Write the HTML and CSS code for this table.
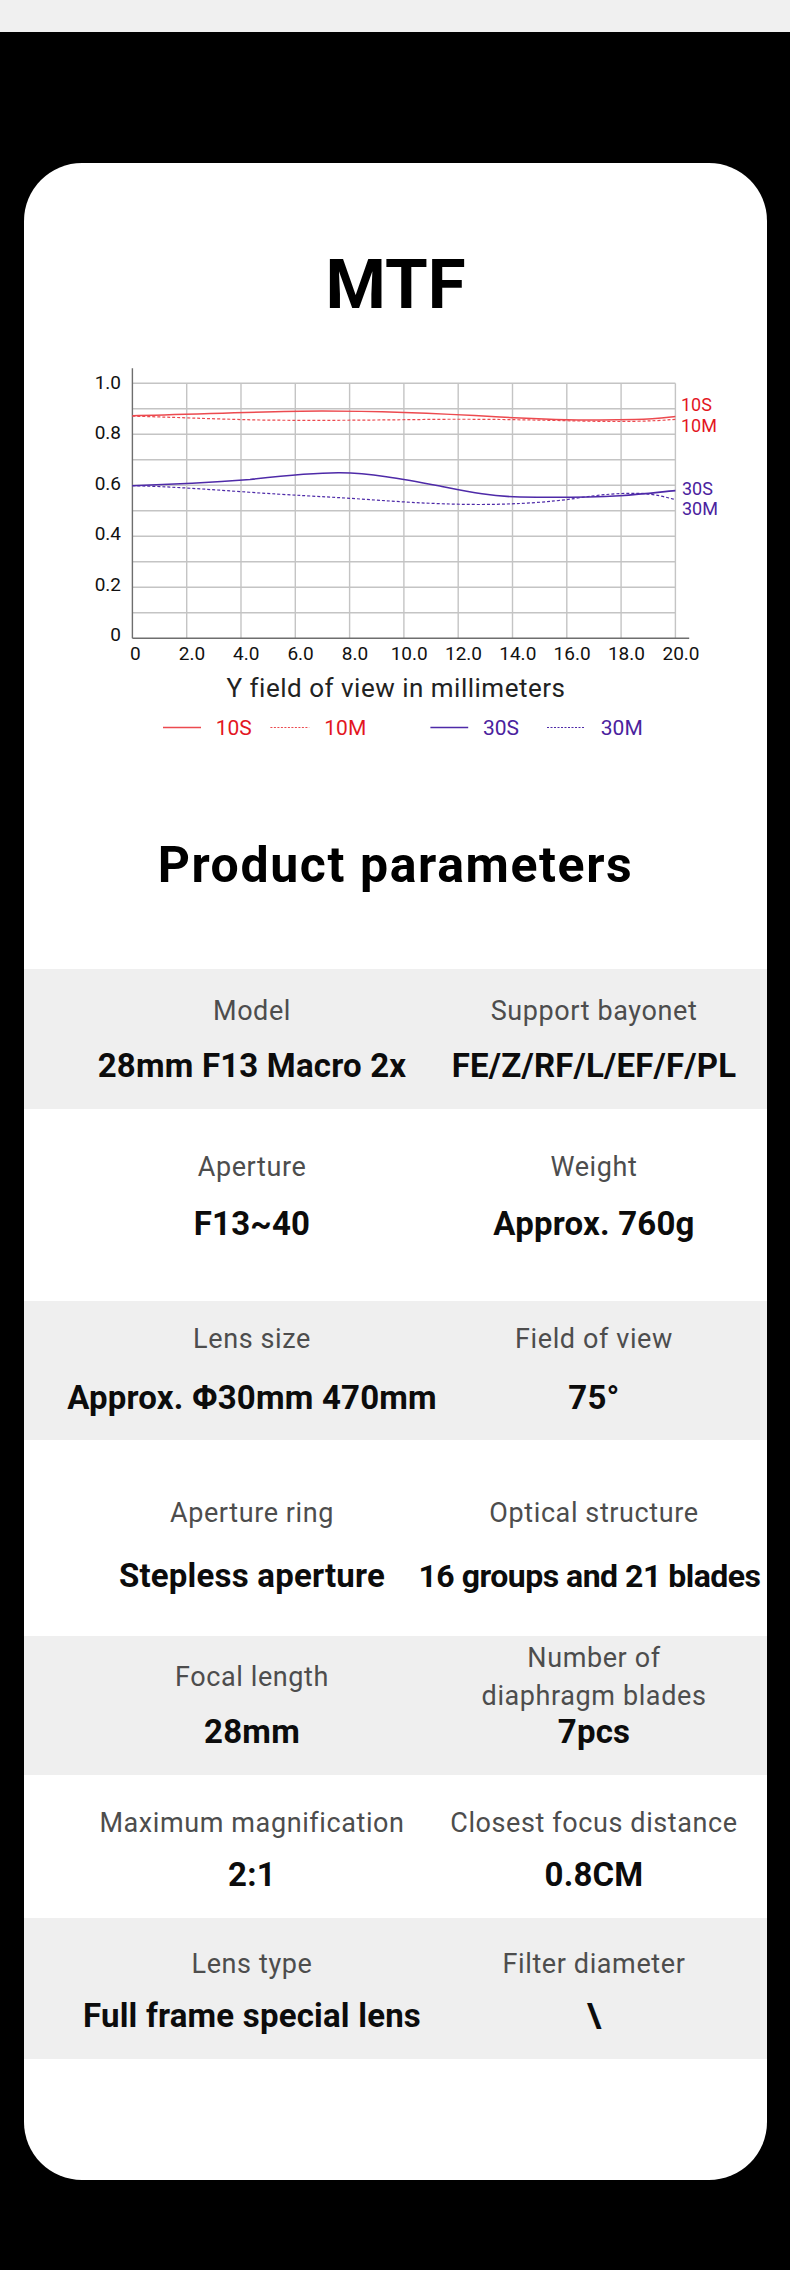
FILE: index.html
```html
<!DOCTYPE html>
<html lang="en">
<head>
<meta charset="utf-8">
<title>MTF and Product parameters</title>
<link rel="stylesheet" href="styles.css">
</head>
<body>
<div class="topbar"></div>
<main class="page">
  <section class="card">
    <h1 class="title">MTF</h1>
    <svg class="chart" viewBox="0 0 660 420" width="660" height="420" xmlns="http://www.w3.org/2000/svg">
      <g class="grid">
        <line x1="72.4" y1="43.3" x2="615.4" y2="43.3"/>
        <line x1="72.4" y1="68.8" x2="615.4" y2="68.8"/>
        <line x1="72.4" y1="94.3" x2="615.4" y2="94.3"/>
        <line x1="72.4" y1="119.8" x2="615.4" y2="119.8"/>
        <line x1="72.4" y1="145.3" x2="615.4" y2="145.3"/>
        <line x1="72.4" y1="170.8" x2="615.4" y2="170.8"/>
        <line x1="72.4" y1="196.3" x2="615.4" y2="196.3"/>
        <line x1="72.4" y1="221.8" x2="615.4" y2="221.8"/>
        <line x1="72.4" y1="247.3" x2="615.4" y2="247.3"/>
        <line x1="72.4" y1="272.8" x2="615.4" y2="272.8"/>
        <line x1="126.7" y1="43.3" x2="126.7" y2="298.3"/>
        <line x1="181" y1="43.3" x2="181" y2="298.3"/>
        <line x1="235.3" y1="43.3" x2="235.3" y2="298.3"/>
        <line x1="289.6" y1="43.3" x2="289.6" y2="298.3"/>
        <line x1="343.9" y1="43.3" x2="343.9" y2="298.3"/>
        <line x1="398.2" y1="43.3" x2="398.2" y2="298.3"/>
        <line x1="452.5" y1="43.3" x2="452.5" y2="298.3"/>
        <line x1="506.8" y1="43.3" x2="506.8" y2="298.3"/>
        <line x1="561.1" y1="43.3" x2="561.1" y2="298.3"/>
        <line x1="615.4" y1="43.3" x2="615.4" y2="298.3"/>
      </g>
      <g class="axis">
        <line x1="72.4" y1="28.3" x2="72.4" y2="298.3"/>
        <line x1="72.4" y1="298.3" x2="629.2" y2="298.3"/>
      </g>
      <g class="ylabels">
        <text x="61" y="49.3">1.0</text>
        <text x="61" y="98.7">0.8</text>
        <text x="61" y="149.7">0.6</text>
        <text x="61" y="200.3">0.4</text>
        <text x="61" y="251.3">0.2</text>
        <text x="61" y="301">0</text>
      </g>
      <g class="xlabels">
        <text x="75.4" y="320">0</text>
        <text x="132" y="320">2.0</text>
        <text x="186.3" y="320">4.0</text>
        <text x="240.6" y="320">6.0</text>
        <text x="294.9" y="320">8.0</text>
        <text x="349.2" y="320">10.0</text>
        <text x="403.5" y="320">12.0</text>
        <text x="457.8" y="320">14.0</text>
        <text x="512.1" y="320">16.0</text>
        <text x="566.4" y="320">18.0</text>
        <text x="621" y="320">20.0</text>
      </g>
      <path class="c-red" d="M72.4,75.7 C130,74.8 200,71.2 262,71 C320,71 380,73.5 440,77 C500,80.3 540,80.5 575,79.5 C595,79 608,77.3 615.4,76.6"/>
      <path class="c-red dash" d="M72.4,76.2 C110,77 150,79 200,80 C260,80.8 320,80 380,79.3 C440,79 480,80.2 520,81 C560,82 590,81.5 615.4,79.3"/>
      <path class="c-purple" d="M72.4,145.7 C110,144.5 150,142.5 190,139.5 C230,135 255,132.6 280,132.8 C310,133.2 340,138.5 380,146 C410,152 430,156.3 460,157 C500,157.6 530,157.3 560,155.7 C585,154 600,152 615.4,150.6"/>
      <path class="c-purple dash" d="M72.4,145.7 C110,146.5 150,149.5 190,152.3 C230,155 260,156.5 290,158.3 C330,161 370,164.3 420,164.5 C460,164.3 490,162 515,158.5 C540,154.5 560,152.8 580,153.4 C595,154 605,157 615.4,159.6"/>
      <g class="rlabels">
        <text class="t-red" x="621" y="70.5">10S</text>
        <text class="t-red" x="621" y="91.5">10M</text>
        <text class="t-purple" x="622" y="154.5">30S</text>
        <text class="t-purple" x="622" y="175">30M</text>
      </g>
      <text class="xtitle" x="336" y="357.3">Y field of view in millimeters</text>
      <g class="legend">
        <line class="c-red" x1="103" y1="387.5" x2="141" y2="387.5"/>
        <text class="t-red" x="155.7" y="395">10S</text>
        <line class="c-red dot" x1="210.4" y1="387.5" x2="249.2" y2="387.5"/>
        <text class="t-red" x="264.3" y="395">10M</text>
        <line class="c-purple" x1="370.4" y1="387.5" x2="408.2" y2="387.5"/>
        <text class="t-purple" x="423" y="395">30S</text>
        <line class="c-purple dot" x1="487" y1="387.5" x2="525.3" y2="387.5"/>
        <text class="t-purple" x="540.8" y="395">30M</text>
      </g>
    </svg>

    <h2 class="subtitle">Product parameters</h2>

    <div class="specs">
      <div class="row row--gray row--1">
        <div class="cell"><span class="label">Model</span><span class="value">28mm F13 Macro 2x</span></div>
        <div class="cell"><span class="label">Support bayonet</span><span class="value">FE/Z/RF/L/EF/F/PL</span></div>
      </div>
      <div class="row row--2">
        <div class="cell"><span class="label">Aperture</span><span class="value">F13~40</span></div>
        <div class="cell"><span class="label">Weight</span><span class="value">Approx. 760g</span></div>
      </div>
      <div class="row row--gray row--3">
        <div class="cell"><span class="label">Lens size</span><span class="value">Approx. Φ30mm 470mm</span></div>
        <div class="cell"><span class="label">Field of view</span><span class="value">75°</span></div>
      </div>
      <div class="row row--4">
        <div class="cell"><span class="label">Aperture ring</span><span class="value">Stepless aperture</span></div>
        <div class="cell"><span class="label">Optical structure</span><span class="value value--tight">16 groups and 21 blades</span></div>
      </div>
      <div class="row row--gray row--5">
        <div class="cell"><span class="label">Focal length</span><span class="value">28mm</span></div>
        <div class="cell"><span class="label">Number of<br>diaphragm blades</span><span class="value">7pcs</span></div>
      </div>
      <div class="row row--6">
        <div class="cell"><span class="label">Maximum magnification</span><span class="value">2:1</span></div>
        <div class="cell"><span class="label">Closest focus distance</span><span class="value">0.8CM</span></div>
      </div>
      <div class="row row--gray row--7">
        <div class="cell"><span class="label">Lens type</span><span class="value">Full frame special lens</span></div>
        <div class="cell"><span class="label">Filter diameter</span><span class="value">\</span></div>
      </div>
    </div>
  </section>
</main>
</body>
</html>
```

FILE: styles.css
```css
* { box-sizing: border-box; }

html, body {
  margin: 0;
  padding: 0;
  background: #000;
}

body {
  font-family: Roboto, "Noto Sans", "Liberation Sans", sans-serif;
  color: #111;
}

.topbar {
  height: 32px;
  background: #f0f0f0;
}

.page {
  padding: 131px 23px 91px 24px;
}

.card {
  background: #fff;
  border-radius: 58px;
  padding: 82px 0 121px;
  overflow: hidden;
}

.title {
  margin: 0;
  font-size: 69px;
  line-height: 80px;
  font-weight: 700;
  text-align: center;
  color: #000;
}

.chart {
  display: block;
  margin: 15px 0 0 36px;
  font-family: Roboto, "Liberation Sans", sans-serif;
}

.grid line {
  stroke: #c4c4c4;
  stroke-width: 1.4;
}

.axis line {
  stroke: #6e6e6e;
  stroke-width: 1.4;
}

.ylabels text {
  font-size: 19px;
  fill: #111;
  text-anchor: end;
}

.xlabels text {
  font-size: 19px;
  fill: #111;
  text-anchor: middle;
}

.c-red {
  fill: none;
  stroke: #ec4a4f;
  stroke-width: 1.5;
}

.c-purple {
  fill: none;
  stroke: #4e2aa8;
  stroke-width: 1.6;
}

.dash {
  stroke-dasharray: 3 2;
  stroke-width: 1.2;
}

.dot {
  stroke-dasharray: 2 1.5;
  stroke-width: 1.2;
}

.rlabels text {
  font-size: 18px;
}

.t-red { fill: #e3161f; }
.t-purple { fill: #4a229e; }

.xtitle {
  font-size: 26px;
  letter-spacing: 0.5px;
  fill: #222;
  text-anchor: middle;
}

.legend text {
  font-size: 21px;
}

.subtitle {
  margin: 75px 0 0;
  font-size: 50px;
  line-height: 60px;
  letter-spacing: 1.6px;
  font-weight: 700;
  text-align: center;
  color: #000;
}

.specs {
  margin-top: 74px;
}

.row {
  display: grid;
  grid-template-columns: 342px 342px;
  padding-left: 57px;
}

.row--gray {
  background: #efefef;
}

.cell {
  display: flex;
  flex-direction: column;
  align-items: center;
  white-space: nowrap;
}

.label {
  font-size: 27px;
  line-height: 38px;
  letter-spacing: 0.6px;
  color: #4d4d4d;
  text-align: center;
  flex: 1;
  display: flex;
  align-items: center;
  justify-content: center;
}

.value {
  font-size: 33px;
  line-height: 40px;
  letter-spacing: 0.2px;
  font-weight: 700;
  color: #0c0c0c;
}

.value--tight {
  font-size: 32px;
  letter-spacing: -0.5px;
  margin-right: 9px;
}

.row--1 { padding-top: 23px; padding-bottom: 23px; }
.row--1 .value { margin-top: 16px; }

.row--2 { padding-top: 39px; padding-bottom: 57px; }
.row--2 .value { margin-top: 18px; }

.row--3 { padding-top: 19px; padding-bottom: 22px; }
.row--3 .value { margin-top: 20px; }

.row--4 { padding-top: 54px; padding-bottom: 40px; }
.row--4 .value { margin-top: 24px; }

.row--5 { padding-top: 3px; padding-bottom: 23px; }
.row--5 .value { margin-top: -3px; }

.row--6 { padding-top: 29px; padding-bottom: 23px; }
.row--6 .value { margin-top: 13px; }

.row--7 { padding-top: 27px; padding-bottom: 23px; }
.row--7 .value { margin-top: 13px; }
```
